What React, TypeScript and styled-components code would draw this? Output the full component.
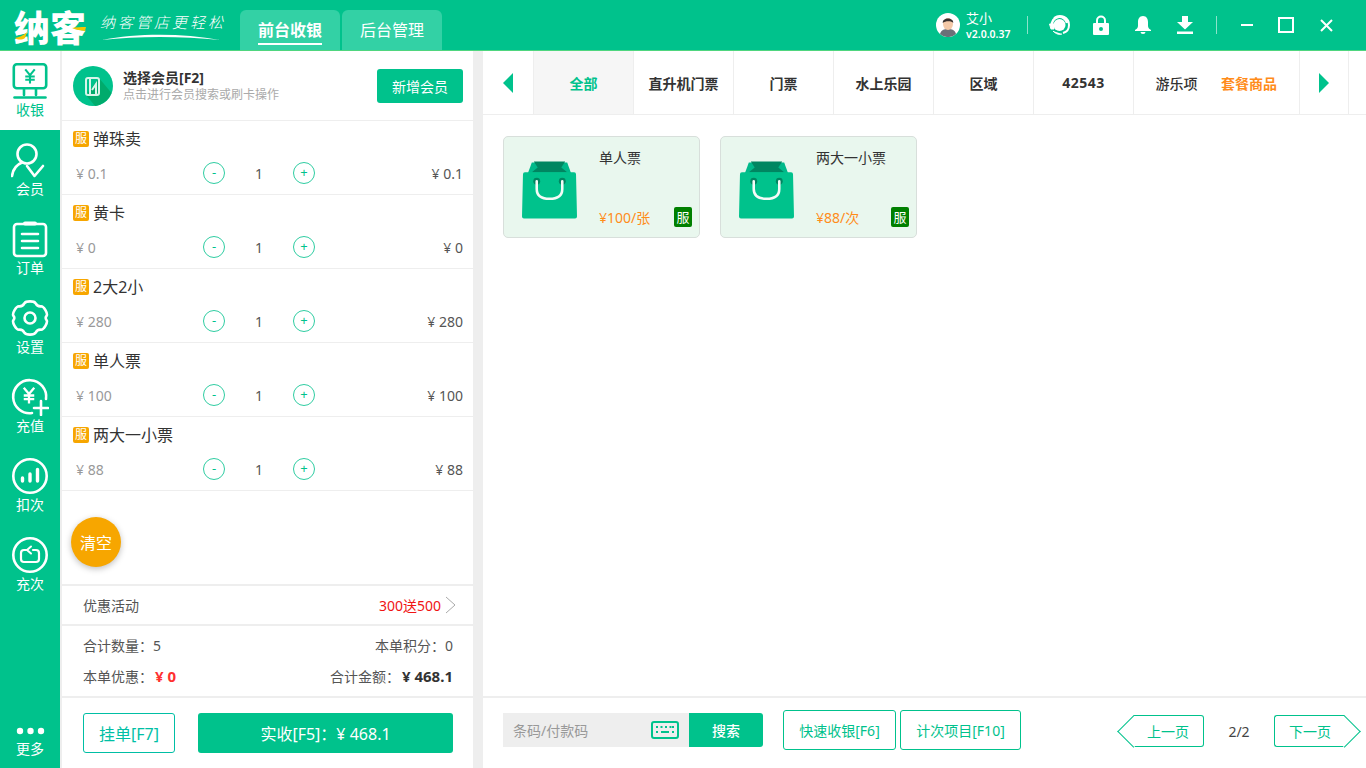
import React, { ReactElement } from 'react'
import styled, { createGlobalStyle } from 'styled-components'

const GREEN = '#00c28c'
const LINE = '#eeeeee'

const GlobalStyle = createGlobalStyle`
  html, body {
    margin: 0;
    padding: 0;
    height: 100%;
    overflow: hidden;
    background: #fff;
    font-family: "Noto Sans", "Noto Sans CJK SC", sans-serif;
    color: #333;
  }
  * { box-sizing: border-box; }
`

const Page = styled.div`
  width: 1366px;
  height: 768px;
  display: flex;
  flex-direction: column;
`

/* ---------- top bar ---------- */

const TopBar = styled.header`
  height: 51px;
  flex: none;
  display: flex;
  align-items: flex-end;
  background: ${GREEN};
  border-bottom: 1px solid #4fd67f;
  padding-left: 14px;
  color: #fff;
`

const Logo = styled.div`
  position: relative;
  width: 74px;
  height: 50px;
  font-family: "Noto Sans CJK SC", sans-serif;
  font-size: 36px;
  font-weight: 900;
  line-height: 52px;
  letter-spacing: 0;
  white-space: nowrap;
`

const LogoAccent = styled.svg`
  position: absolute;
  left: 0;
  top: 24px;
`

const Slogan = styled.div`
  margin-left: 12px;
  width: 140px;
  height: 50px;
  padding-top: 12px;
  font-family: "Noto Sans CJK SC", sans-serif;
  font-size: 15px;
  font-weight: 300;
  font-style: italic;
  line-height: 20px;
  letter-spacing: 3px;
  white-space: nowrap;
`

const SloganLine = styled.svg`
  display: block;
  margin: 1px 0 0 2px;
`

const TopTabs = styled.nav`
  display: flex;
  gap: 2px;
`

const TopTab = styled.div`
  width: 100px;
  height: 40px;
  display: flex;
  justify-content: center;
  padding-top: 7px;
  background: #33d1a5;
  border-radius: 6px 6px 0 0;
  font-size: 16px;
  font-weight: ${p => (p.$active ? 700 : 400)};
  font-family: "Noto Sans CJK SC", sans-serif;
`

const TopTabLabel = styled.span`
  height: 28px;
  line-height: 24px;
  ${p => (p.$active ? 'border-bottom: 2px solid #fff;' : '')}
`

const TopRight = styled.div`
  margin-left: auto;
  height: 50px;
  display: flex;
  align-items: center;
  padding-right: 10px;
`

const Avatar = styled.svg`
  width: 24px;
  height: 24px;
  margin-right: 6px;
`

const UserInfo = styled.div`
  width: 61px;
  display: flex;
  flex-direction: column;
  margin-top: 1px;
`

const UserName = styled.span`
  font-size: 13px;
  line-height: 16px;
`

const UserVersion = styled.span`
  font-size: 10.5px;
  line-height: 16px;
  font-weight: 600;
`

const TopSep = styled.i`
  width: 1px;
  height: 18px;
  background: rgba(255, 255, 255, 0.55);
`

const ToolIcons = styled.div`
  display: flex;
  margin: 0 10px;
`

const TopIcon = styled.div`
  width: ${p => p.$w}px;
  display: flex;
  justify-content: center;
  align-items: center;
`

/* ---------- side nav ---------- */

const Body = styled.div`
  flex: 1;
  min-height: 0;
  display: flex;
  background: ${LINE};
`

const SideNav = styled.nav`
  width: 60px;
  flex: none;
  display: flex;
  flex-direction: column;
  background: ${GREEN};
`

const NavItem = styled.div`
  height: 79px;
  padding-top: 11px;
  display: flex;
  flex-direction: column;
  align-items: center;
  color: ${p => (p.$active ? GREEN : '#fff')};
  background: ${p => (p.$active ? '#fff' : 'transparent')};
  font-size: 14px;
  line-height: 18px;
  svg { display: block; margin-bottom: 1px; }
`

const NavMore = styled(NavItem)`
  margin-top: auto;
  height: 50px;
  padding-top: 9px;
  svg { margin-bottom: 5px; }
`

/* ---------- cart ---------- */

const Cart = styled.section`
  width: 411px;
  margin-left: 2px;
  flex: none;
  display: flex;
  flex-direction: column;
  background: #fff;
`

const MemberBar = styled.div`
  height: 70px;
  flex: none;
  display: flex;
  align-items: center;
  padding: 0 10px 0 11px;
  border-bottom: 1px solid ${LINE};
`

const MemberBadge = styled.svg`
  width: 40px;
  height: 40px;
  margin-right: 10px;
`

const MemberText = styled.div`
  flex: 1;
  display: flex;
  flex-direction: column;
`

const MemberTitle = styled.span`
  font-size: 14px;
  line-height: 17px;
  font-weight: 700;
`

const MemberHint = styled.span`
  font-size: 12px;
  line-height: 17px;
  color: #aaa;
`

const SolidButton = styled.button`
  border: 0;
  border-radius: 3px;
  background: ${GREEN};
  color: #fff;
  font-family: inherit;
  padding: 0;
`

const AddMember = styled(SolidButton)`
  width: 86px;
  height: 34px;
  font-size: 14px;
`

const CartRow = styled.div`
  height: 74px;
  flex: none;
  padding: 8px 10px 0 11px;
  border-bottom: 1px solid ${LINE};
`

const RowTitle = styled.div`
  display: flex;
  align-items: center;
  height: 18px;
  font-size: 16px;
  color: #333;
`

const ServiceTag = styled.span`
  width: 16px;
  height: 16px;
  margin: 2px 4px 0 0;
  border-radius: 2px;
  background: #f7a600;
  color: #fff;
  font-size: 12px;
  line-height: 16px;
  text-align: center;
`

const RowPrices = styled.div`
  display: grid;
  grid-template-columns: 130px 22px 68px 22px 1fr;
  align-items: center;
  margin-top: 15px;
  height: 22px;
  font-size: 14px;
`

const UnitPrice = styled.span`
  padding-left: 3px;
  color: #999;
`

const Stepper = styled.span`
  width: 22px;
  height: 22px;
  border: 1px solid #2fcda2;
  border-radius: 50%;
  color: ${GREEN};
  font-size: 13px;
  line-height: 19px;
  text-align: center;
`

const Qty = styled.span`
  text-align: center;
  color: #555;
`

const LineTotal = styled.span`
  text-align: right;
  color: #555;
`

const CartSpace = styled.div`
  flex: 1;
  display: flex;
  align-items: flex-start;
  padding: 26px 0 0 9px;
`

const ClearButton = styled.button`
  width: 50px;
  height: 50px;
  border: 0;
  border-radius: 50%;
  padding: 0;
  background: #f7a600;
  color: #fff;
  font-family: inherit;
  font-size: 16px;
  box-shadow: 0 2px 6px rgba(0, 0, 0, 0.25);
`

const PromoRow = styled.div`
  height: 42px;
  flex: none;
  display: flex;
  align-items: center;
  padding: 0 17px 0 21px;
  border-top: 2px solid ${LINE};
  border-bottom: 2px solid ${LINE};
  font-size: 14px;
  color: #555;
`

const PromoValue = styled.span`
  margin-left: auto;
  color: #f01414;
  font-size: 14px;
`

const Chevron = styled.svg`
  margin-left: 4px;
`

const Totals = styled.div`
  height: 70px;
  flex: none;
  display: grid;
  grid-template-columns: 1fr auto;
  align-content: center;
  row-gap: 12px;
  padding: 0 20px 0 21px;
  font-size: 14px;
  line-height: 18px;
  color: #555;
`

const TotalRight = styled.span`
  text-align: right;
`

const Strong = styled.b`
  margin-left: 2px;
  font-size: 15px;
  color: ${p => p.$color};
`

const CartActions = styled.div`
  height: 72px;
  flex: none;
  display: flex;
  gap: 23px;
  align-items: flex-start;
  padding: 15px 20px 0 21px;
  border-top: 2px solid ${LINE};
`

const HoldButton = styled.button`
  width: 92px;
  height: 40px;
  border: 1px solid #00bfa5;
  border-radius: 3px;
  background: #fff;
  color: #00bfa5;
  font-family: inherit;
  font-size: 16px;
  padding: 0;
`

const PayButton = styled(SolidButton)`
  flex: 1;
  height: 40px;
  font-size: 16px;
`

/* ---------- goods ---------- */

const Goods = styled.section`
  margin-left: 10px;
  flex: 1;
  min-width: 0;
  display: flex;
  flex-direction: column;
  background: #fff;
`

const CategoryBar = styled.div`
  height: 64px;
  flex: none;
  display: flex;
  border-bottom: 1px solid ${LINE};
`

const ArrowCell = styled.div`
  width: ${p => p.$w}px;
  flex: none;
  display: flex;
  align-items: center;
  justify-content: center;
  ${p => (p.$border ? `border-left: 1px solid ${LINE}; border-right: 1px solid ${LINE};` : '')}
`

const CategoryScroll = styled.div`
  width: 666px;
  flex: none;
  display: flex;
  overflow: hidden;
`

const Category = styled.div`
  width: 100px;
  flex: none;
  display: flex;
  align-items: center;
  justify-content: center;
  border-left: 1px solid ${LINE};
  background: ${p => (p.$active ? '#f6f6f6' : '#fff')};
  color: ${p => (p.$active ? GREEN : '#333')};
  font-size: 14px;
  font-weight: 700;
  white-space: nowrap;
`

const NumberCategory = styled(Category)`
  letter-spacing: 0.5px;
`

const PlainCategory = styled(Category)`
  font-weight: 500;
`

const PackageCategory = styled(Category)`
  border-left: 0;
  color: #ff8c1a;
`

const GoodsGrid = styled.div`
  flex: 1;
  display: flex;
  align-items: flex-start;
  gap: 20px;
  padding: 21px 20px;
`

const GoodsCard = styled.div`
  position: relative;
  width: 197px;
  height: 102px;
  display: flex;
  padding: 23px 0 0 18px;
  background: #e9f7ee;
  border: 1px solid #d8dfdb;
  border-radius: 5px;
`

const CardText = styled.div`
  margin-left: 22px;
  height: 67px;
  flex: 1;
  display: flex;
  flex-direction: column;
  justify-content: space-between;
`

const CardName = styled.span`
  margin-top: -11px;
  font-size: 14px;
  line-height: 18px;
  color: #333;
`

const CardPrice = styled.span`
  font-size: 14px;
  line-height: 18px;
  color: #ff8c1a;
`

const CardTag = styled.span`
  position: absolute;
  right: 7px;
  bottom: 10px;
  width: 18px;
  height: 20px;
  border-radius: 2px;
  background: #008000;
  color: #fff;
  font-size: 13px;
  line-height: 20px;
  text-align: center;
`

const Footer = styled.div`
  height: 72px;
  flex: none;
  display: flex;
  align-items: flex-start;
  border-top: 2px solid ${LINE};
  padding: 12px 0 0 20px;
`

const SearchBox = styled.div`
  width: 186px;
  height: 34px;
  margin-top: 3px;
  display: flex;
  align-items: center;
  justify-content: space-between;
  padding: 0 10px;
  background: ${LINE};
  color: #999;
  font-size: 14px;
`

const SearchButton = styled(SolidButton)`
  width: 74px;
  height: 34px;
  margin-top: 3px;
  border-radius: 0 3px 3px 0;
  font-size: 14px;
  font-weight: 500;
`

const OutlineButton = styled.button`
  height: 40px;
  width: ${p => p.$w}px;
  margin-left: ${p => p.$gap}px;
  padding: 0;
  border: 1px solid ${GREEN};
  border-radius: 3px;
  background: #fff;
  color: ${GREEN};
  font-family: inherit;
  font-size: 14px;
`

const Pager = styled.div`
  margin-left: auto;
  margin-right: 21px;
  margin-top: 5px;
  display: flex;
  align-items: center;
  font-size: 14px;
  color: #444;
`

const PageCount = styled.span`
  width: 70px;
  text-align: center;
`

const PageButton = styled.button`
  position: relative;
  width: 71px;
  height: 32px;
  padding: 0;
  background: #fff;
  border: 1px solid ${GREEN};
  border-radius: 3px;
  color: ${GREEN};
  font-family: inherit;
  font-size: 14px;
  ${p => (p.$prev ? 'border-left: 0; border-radius: 0 3px 3px 0;' : 'border-right: 0; border-radius: 3px 0 0 3px;')}
  &::before {
    content: '';
    position: absolute;
    top: 4px;
    width: 22px;
    height: 22px;
    background: #fff;
    transform: rotate(45deg);
    ${p =>
      p.$prev
        ? `left: -11px; border-left: 1px solid ${GREEN}; border-bottom: 1px solid ${GREEN};`
        : `right: -11px; border-right: 1px solid ${GREEN}; border-top: 1px solid ${GREEN};`}
  }
`

const PageLabel = styled.span`
  position: relative;
`

/* ---------- drawings ---------- */

const YenMark = ({ cx, cy, s = 1 }: { cx: number; cy: number; s?: number }): ReactElement => (
  <path
    transform={`translate(${cx} ${cy}) scale(${s})`}
    d="M-5 -7 L0 -1 L5 -7 M0 -1 V8 M-5 0.5 H5 M-5 4 H5"
    fill="none"
    stroke="currentColor"
    strokeWidth="2.2"
  />
)

const navStroke = { fill: 'none', stroke: 'currentColor', strokeWidth: 2.6, strokeLinecap: 'round' as const, strokeLinejoin: 'round' as const }

const CashIcon = (): ReactElement => (
  <svg width="38" height="38" viewBox="0 0 38 38">
    <rect x="2.8" y="2.3" width="32.4" height="24" rx="3" {...navStroke} />
    <YenMark cx={19} cy={14} s={0.95} />
    <path d="M13 27 V33 M25 27 V33" {...navStroke} />
    <path d="M3.5 35.5 H34.5" {...navStroke} />
  </svg>
)

const MemberIcon = (): ReactElement => (
  <svg width="38" height="38" viewBox="0 0 38 38">
    <circle cx="16" cy="13" r="9.5" {...navStroke} />
    <path d="M1 35 C2 28 6 23.5 11 21.5" {...navStroke} />
    <path d="M16 25 L23.5 35 L32 25" {...navStroke} />
  </svg>
)

const OrderIcon = (): ReactElement => (
  <svg width="38" height="38" viewBox="0 0 38 38">
    <rect x="3" y="4" width="32" height="32" rx="3" {...navStroke} />
    <path d="M14 3.5 H24" fill="none" stroke="currentColor" strokeWidth="4" strokeLinecap="round" />
    <path d="M11 14 H27 M11 21 H27 M11 28 H27" {...navStroke} />
  </svg>
)

const GearIcon = (): ReactElement => (
  <svg width="38" height="38" viewBox="0 0 38 38">
    <path
      d="M13.5 4.2 C15 1.8 23 1.8 24.5 4.2 C25.6 6.4 27.7 7.6 30.1 7.3 C33 7.4 36.9 14.2 35.7 16.7 C34.3 18.3 34.3 19.7 35.7 21.3 C36.9 23.8 33 30.6 30.1 30.7 C27.7 30.4 25.6 31.6 24.5 33.8 C23 36.2 15 36.2 13.5 33.8 C12.4 31.6 10.3 30.4 7.9 30.7 C5 30.6 1.1 23.8 2.3 21.3 C3.7 19.7 3.7 18.3 2.3 16.7 C1.1 14.2 5 7.4 7.9 7.3 C10.3 7.6 12.4 6.4 13.5 4.2 Z"
      {...navStroke}
    />
    <circle cx="19" cy="19" r="5.5" {...navStroke} />
  </svg>
)

const RechargeIcon = (): ReactElement => (
  <svg width="38" height="38" viewBox="0 0 38 38">
    <path d="M35 21 A16.5 16.5 0 1 0 21 35" {...navStroke} />
    <YenMark cx={18} cy={17} s={1.05} />
    <path d="M30 23 V37 M23 30 H37" {...navStroke} />
  </svg>
)

const DeductIcon = (): ReactElement => (
  <svg width="38" height="38" viewBox="0 0 38 38">
    <circle cx="19" cy="19" r="16.7" {...navStroke} />
    <path d="M11.5 21 V24 M19 17 V24 M26.5 12.5 V24" fill="none" stroke="currentColor" strokeWidth="3.4" strokeLinecap="round" />
  </svg>
)

const TimesIcon = (): ReactElement => (
  <svg width="38" height="38" viewBox="0 0 38 38">
    <circle cx="19" cy="19" r="16.7" {...navStroke} />
    <path d="M22 14 H25 A3 3 0 0 1 28 17 V23 A3 3 0 0 1 25 26 H13 A3 3 0 0 1 10 23 V17 A3 3 0 0 1 13 14 H16" {...navStroke} strokeWidth={2.2} />
    <path d="M20 10.5 L16 14 L20 17.5" {...navStroke} strokeWidth={2} />
  </svg>
)

const DotsIcon = (): ReactElement => (
  <svg width="30" height="8" viewBox="0 0 30 8" fill="currentColor">
    <circle cx="5" cy="4" r="3.2" />
    <circle cx="15.5" cy="4" r="3.2" />
    <circle cx="26" cy="4" r="3.2" />
  </svg>
)

const BagIcon = (): ReactElement => (
  <svg width="55" height="60" viewBox="0 0 56 60" style={{ flex: 'none' }}>
    <path d="M10 2 H46 L50 13 H6 Z" fill="#00b98a" />
    <path d="M12 1 H44 L40 7 L46 12 H10 L16 7 Z" fill="#008661" />
    <path d="M3 12 H53 A2 2 0 0 1 55 14 L56 57 A2 2 0 0 1 54 59 H2 A2 2 0 0 1 0 57 L1 14 A2 2 0 0 1 3 12 Z" fill="#00c28c" />
    <circle cx="15" cy="21" r="3.5" fill="#008661" />
    <circle cx="41" cy="21" r="3.5" fill="#008661" />
    <path d="M15 21 V29 C15 36 20 39 28 39 C36 39 41 36 41 29 V21" fill="none" stroke="#f4fbf7" strokeWidth="2.6" strokeLinecap="round" />
  </svg>
)

const KeyboardIcon = (): ReactElement => (
  <svg width="28" height="18" viewBox="0 0 28 18">
    <rect x="1" y="1" width="26" height="16" rx="2" fill="none" stroke={GREEN} strokeWidth="2" />
    <path d="M5 6 H7 M9.5 6 H11.5 M14 6 H16 M18.5 6 H20.5 M5 11 H7 M10 11 H18 M21 6 H23 M21 11 H23" stroke={GREEN} strokeWidth="2" />
  </svg>
)

const cart = [
  { name: '弹珠卖', price: '0.1' },
  { name: '黄卡', price: '0' },
  { name: '2大2小', price: '280' },
  { name: '单人票', price: '100' },
  { name: '两大一小票', price: '88' }
]

const goods = [
  { name: '单人票', price: '¥100/张' },
  { name: '两大一小票', price: '¥88/次' }
]

export default function App(): ReactElement {
  return (
    <Page>
      <GlobalStyle />
      <TopBar>
        <Logo>
          纳客
          <LogoAccent width="74" height="18" viewBox="0 0 74 18">
            <path d="M1 14 C5 13 9 12 13 8 L11 14 C8 16 4 16 1 14 Z" fill="#f7c600" />
            <path d="M58 4 C62 3 67 3 72 3 L71 7 C67 6 62 6 58 4 Z" fill="#f7c600" />
          </LogoAccent>
        </Logo>
        <Slogan>
          纳客管店更轻松
          <SloganLine width="118" height="8" viewBox="0 0 118 8">
            <path d="M0 7 C35 0 80 0 118 7 C80 3 35 3 0 7 Z" fill="#fff" />
          </SloganLine>
        </Slogan>
        <TopTabs>
          <TopTab $active>
            <TopTabLabel $active>前台收银</TopTabLabel>
          </TopTab>
          <TopTab>
            <TopTabLabel>后台管理</TopTabLabel>
          </TopTab>
        </TopTabs>
        <TopRight>
          <Avatar viewBox="0 0 24 24">
            <circle cx="12" cy="12" r="12" fill="#fff" />
            <path d="M4 21 C5 17 8 16 12 16 C16 16 19 17 20 21 A12 12 0 0 1 4 21 Z" fill="#6b7078" />
            <ellipse cx="12" cy="11" rx="5" ry="6" fill="#f4c9a8" />
            <path d="M6.8 10 C6 4 18 4 17.2 10 C16 7.5 9 7.5 6.8 10 Z" fill="#3a3230" />
          </Avatar>
          <UserInfo>
            <UserName>艾小</UserName>
            <UserVersion>v2.0.0.37</UserVersion>
          </UserInfo>
          <TopSep />
          <ToolIcons>
            <TopIcon $w={42}>
              <svg width="21" height="22" viewBox="0 0 21 22">
                <path d="M3 12 A7.5 7.5 0 0 1 18 9" fill="none" stroke="#fff" strokeWidth="2.4" />
                <path d="M5 4 C12 -1 20 4 20 11 C20 15 18 18 14 19" fill="none" stroke="#fff" strokeWidth="2" />
                <circle cx="10.5" cy="11" r="6" fill="#fff" />
                <path d="M0.5 10 H5 V15 H2 Z M4 17 C7 20 10 21 13 20" fill="#fff" stroke="#fff" />
              </svg>
            </TopIcon>
            <TopIcon $w={42}>
              <svg width="16" height="20" viewBox="0 0 16 20">
                <path d="M4 9 V5.5 A4 4 0 0 1 12 5.5 V9" fill="none" stroke="#fff" strokeWidth="2" />
                <path fillRule="evenodd" d="M1 8 H15 A1 1 0 0 1 16 9 V19 A1 1 0 0 1 15 20 H1 A1 1 0 0 1 0 19 V9 A1 1 0 0 1 1 8 Z M8 12 A2 2 0 1 0 8 16 A2 2 0 1 0 8 12 Z" fill="#fff" />
              </svg>
            </TopIcon>
            <TopIcon $w={42}>
              <svg width="16" height="18" viewBox="0 0 16 18" fill="#fff">
                <path d="M8 0 C11.5 0 13 3 13 6 V10 C13 12 14.5 13 16 14 V15 H0 V14 C1.5 13 3 12 3 10 V6 C3 3 4.5 0 8 0 Z" />
                <path d="M5.5 16 H10.5 A2.5 2 0 0 1 5.5 16 Z" />
              </svg>
            </TopIcon>
            <TopIcon $w={42}>
              <svg width="16" height="18" viewBox="0 0 16 18" fill="#fff">
                <path d="M5 0 H11 V6 H16 L8 13.5 L0 6 H5 Z" />
                <rect x="0" y="15.5" width="16" height="2.5" />
              </svg>
            </TopIcon>
          </ToolIcons>
          <TopSep />
          <TopIcon $w={59}>
            <svg width="12" height="4" viewBox="0 0 12 4">
              <rect y="1" width="12" height="2" fill="#fff" />
            </svg>
          </TopIcon>
          <TopIcon $w={20}>
            <svg width="16" height="16" viewBox="0 0 16 16">
              <rect x="1" y="1" width="14" height="14" fill="none" stroke="#fff" strokeWidth="2" />
            </svg>
          </TopIcon>
          <TopIcon $w={60}>
            <svg width="13" height="13" viewBox="0 0 13 13">
              <path d="M1 1 L12 12 M12 1 L1 12" stroke="#fff" strokeWidth="2" />
            </svg>
          </TopIcon>
        </TopRight>
      </TopBar>

      <Body>
        <SideNav>
          <NavItem $active>
            <CashIcon />
            收银
          </NavItem>
          <NavItem>
            <MemberIcon />
            会员
          </NavItem>
          <NavItem>
            <OrderIcon />
            订单
          </NavItem>
          <NavItem>
            <GearIcon />
            设置
          </NavItem>
          <NavItem>
            <RechargeIcon />
            充值
          </NavItem>
          <NavItem>
            <DeductIcon />
            扣次
          </NavItem>
          <NavItem>
            <TimesIcon />
            充次
          </NavItem>
          <NavMore>
            <DotsIcon />
            更多
          </NavMore>
        </SideNav>

        <Cart>
          <MemberBar>
            <MemberBadge viewBox="0 0 40 40">
              <circle cx="20" cy="20" r="20" fill={GREEN} />
              <path d="M26 12 L38.5 27 A20 20 0 0 1 22 39.9 L13 29 Z" fill="#00ab6c" />
              <rect x="13" y="12" width="13" height="17" rx="2" fill="none" stroke="#d8f5ea" strokeWidth="2" />
              <path d="M17 13 V28 M19 24 L23 18 V28" fill="none" stroke="#d8f5ea" strokeWidth="2" />
            </MemberBadge>
            <MemberText>
              <MemberTitle>选择会员[F2]</MemberTitle>
              <MemberHint>点击进行会员搜索或刷卡操作</MemberHint>
            </MemberText>
            <AddMember>新增会员</AddMember>
          </MemberBar>

          {cart.map(item => (
            <CartRow key={item.name}>
              <RowTitle>
                <ServiceTag>服</ServiceTag>
                {item.name}
              </RowTitle>
              <RowPrices>
                <UnitPrice>¥ {item.price}</UnitPrice>
                <Stepper>-</Stepper>
                <Qty>1</Qty>
                <Stepper>+</Stepper>
                <LineTotal>¥ {item.price}</LineTotal>
              </RowPrices>
            </CartRow>
          ))}

          <CartSpace>
            <ClearButton>清空</ClearButton>
          </CartSpace>

          <PromoRow>
            优惠活动
            <PromoValue>300送500</PromoValue>
            <Chevron width="11" height="18" viewBox="0 0 11 18">
              <path d="M1 1 L10 9 L1 17" fill="none" stroke="#aaa" strokeWidth="1" />
            </Chevron>
          </PromoRow>

          <Totals>
            <span>合计数量：5</span>
            <TotalRight>本单积分：0</TotalRight>
            <span>
              本单优惠：<Strong $color="#ff3030">¥ 0</Strong>
            </span>
            <TotalRight>
              合计金额：<Strong $color="#333">¥ 468.1</Strong>
            </TotalRight>
          </Totals>

          <CartActions>
            <HoldButton>挂单[F7]</HoldButton>
            <PayButton>实收[F5]：¥ 468.1</PayButton>
          </CartActions>
        </Cart>

        <Goods>
          <CategoryBar>
            <ArrowCell $w={50}>
              <svg width="10" height="20" viewBox="0 0 10 20">
                <path d="M10 0 V20 L0 10 Z" fill={GREEN} />
              </svg>
            </ArrowCell>
            <CategoryScroll>
              <Category $active>全部</Category>
              <Category>直升机门票</Category>
              <Category>门票</Category>
              <Category>水上乐园</Category>
              <Category>区域</Category>
              <NumberCategory>42543</NumberCategory>
              <PlainCategory>游乐项目</PlainCategory>
            </CategoryScroll>
            <PackageCategory>套餐商品</PackageCategory>
            <ArrowCell $w={50} $border>
              <svg width="10" height="20" viewBox="0 0 10 20">
                <path d="M0 0 V20 L10 10 Z" fill={GREEN} />
              </svg>
            </ArrowCell>
          </CategoryBar>

          <GoodsGrid>
            {goods.map(item => (
              <GoodsCard key={item.name}>
                <BagIcon />
                <CardText>
                  <CardName>{item.name}</CardName>
                  <CardPrice>{item.price}</CardPrice>
                </CardText>
                <CardTag>服</CardTag>
              </GoodsCard>
            ))}
          </GoodsGrid>

          <Footer>
            <SearchBox>
              条码/付款码
              <KeyboardIcon />
            </SearchBox>
            <SearchButton>搜索</SearchButton>
            <OutlineButton $w={113} $gap={20}>
              快速收银[F6]
            </OutlineButton>
            <OutlineButton $w={121} $gap={4}>
              计次项目[F10]
            </OutlineButton>
            <Pager>
              <PageButton $prev>
                <PageLabel>上一页</PageLabel>
              </PageButton>
              <PageCount>2/2</PageCount>
              <PageButton>
                <PageLabel>下一页</PageLabel>
              </PageButton>
            </Pager>
          </Footer>
        </Goods>
      </Body>
    </Page>
  )
}
